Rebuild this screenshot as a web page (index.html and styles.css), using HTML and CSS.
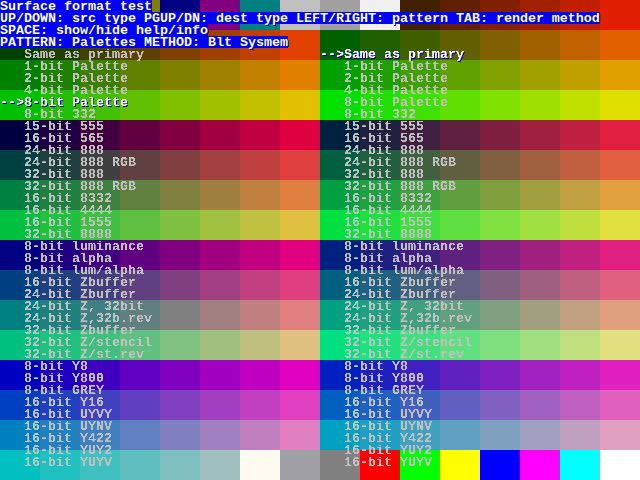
FILE: index.html
```
<!DOCTYPE html>
<html lang="en">
<head>
<meta charset="utf-8">
<title>Surface format test</title>
<link rel="stylesheet" href="styles.css">
</head>
<body>
<main class="screen">
  <div class="palette" id="palette"></div>
  <div class="overlay">
    <header class="help">
      <div class="line"><span class="bar">Surface format test</span></div>
      <div class="line"><span class="bar">UP/DOWN: src type PGUP/DN: dest type LEFT/RIGHT: pattern TAB: render method</span></div>
      <div class="line"><span class="bar">SPACE: show/hide help/info</span></div>
      <div class="line"><span class="bar">PATTERN: Palettes METHOD: Blt Sysmem</span></div>
    </header>
    <div class="columns">
      <div class="list" id="source"></div>
      <div class="list" id="dest"></div>
    </div>
  </div>
</main>
<svg class="defs" width="0" height="0" aria-hidden="true">
  <filter id="crisp" x="0" y="0" width="1" height="1" color-interpolation-filters="sRGB">
    <feComponentTransfer><feFuncA type="linear" slope="4" intercept="-1.5"/></feComponentTransfer>
  </filter>
</svg>
<script src="main.js"></script>
</body>
</html>
```

FILE: styles.css
```
body {
  margin: 0;
  background: #000;
}

.screen {
  display: grid;
  width: 640px;
  height: 480px;
  overflow: hidden;
}

.palette,
.overlay {
  grid-area: 1 / 1;
}

.palette {
  display: grid;
  grid-template-columns: repeat(16, 40px);
  grid-template-rows: repeat(16, 30px);
}

.overlay {
  z-index: 1;
  font: bold 13.33px/14px "Liberation Mono", monospace;
  color: #c0c0c0;
}

.line {
  height: 12px;
  white-space: pre;
}

.help {
  color: #fff;
  text-shadow: 1px 1px 0 #0000a0;
}

.bar {
  display: inline-block;
  height: 12px;
  vertical-align: top;
  background: #00f;
}

.columns {
  display: grid;
  grid-template-columns: 320px 320px;
  filter: url(#crisp);
}

.selected {
  color: #fff;
  text-shadow: 1px 1px 0 #0000a0;
}

.defs {
  position: absolute;
}
```

FILE: main.js
```
// 256-entry palette: 3 bits red, 3 bits green, 2 bits blue,
// with the fixed system colours at both ends.
const low = ['#000000', '#800000', '#008000', '#808000', '#000080',
  '#800080', '#008080', '#c0c0c0', '#a0a0a0', '#f0f0f0'];
const high = ['#fffbf0', '#a0a0a4', '#808080', '#ff0000', '#00ff00',
  '#ffff00', '#0000ff', '#ff00ff', '#00ffff', '#ffffff'];

function entry(i) {
  if (i < 10) return low[i];
  if (i > 245) return high[i - 246];
  return `rgb(${(i & 7) * 32}, ${((i >> 3) & 7) * 32}, ${(i >> 6) * 64})`;
}

const palette = document.getElementById('palette');
for (let i = 0; i < 256; i++) {
  const cell = document.createElement('div');
  cell.style.background = entry(i);
  palette.append(cell);
}

const formats = ['Same as primary', '1-bit Palette', '2-bit Palette',
  '4-bit Palette', '8-bit Palette', '8-bit 332', '15-bit 555', '16-bit 565',
  '24-bit 888', '24-bit 888 RGB', '32-bit 888', '32-bit 888 RGB',
  '16-bit 8332', '16-bit 4444', '16-bit 1555', '32-bit 8888',
  '8-bit luminance', '8-bit alpha', '8-bit lum/alpha', '16-bit Zbuffer',
  '24-bit Zbuffer', '24-bit Z, 32bit', '24-bit Z,32b.rev', '32-bit Zbuffer',
  '32-bit Z/stencil', '32-bit Z/st.rev', '8-bit Y8', '8-bit Y800',
  '8-bit GREY', '16-bit Y16', '16-bit UYVY', '16-bit UYNV', '16-bit Y422',
  '16-bit YUY2', '16-bit YUYV'];

function fill(id, selected) {
  const list = document.getElementById(id);
  formats.forEach((name, i) => {
    const row = document.createElement('div');
    row.className = i === selected ? 'line selected' : 'line';
    row.textContent = (i === selected ? '-->' : '   ') + name;
    list.append(row);
  });
}

fill('source', 4);
fill('dest', 0);
```
